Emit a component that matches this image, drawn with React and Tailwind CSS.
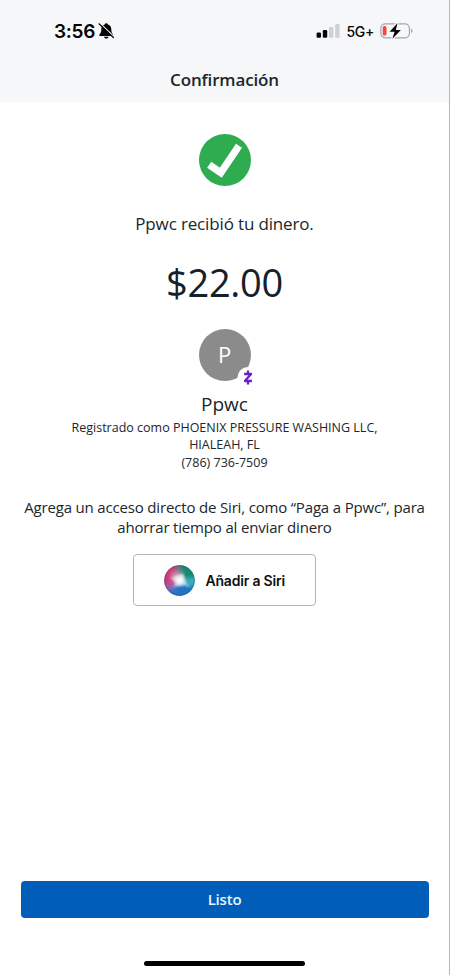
function BellOff() {
  return (
    <svg className="h-[18px] w-[17px]" viewBox="0 0 17 18" fill="none">
      <path d="M8.3 1.2c-.9 0-1.5.6-1.6 1.3C4.300 3.200 3.300 5 3.300 7.300c0 2.800-.6 3.900-1.600 4.900-.4.400-.5.700-.5 1 0 .5.400.8.900.8h12.400c.5 0 .9-.3.9-.8 0-.3-.1-.6-.5-1-1-1-1.600-2.100-1.600-4.900 0-2.300-1-4.100-3.400-4.800-.1-.7-.7-1.300-1.600-1.300z" fill="#050505" />
      <path d="M6 14.700h4.600c-.2 1.100-1.100 1.800-2.300 1.800S6.200 15.800 6 14.700z" fill="#050505" />
      <path d="M2.200 1.500 16.400 15" stroke="#f6f7f9" strokeWidth="1.100" />
      <path d="M1 1.800 15.400 15.500" stroke="#050505" strokeWidth="1.200" strokeLinecap="round" />
    </svg>
  );
}

function Signal() {
  return (
    <svg className="h-[15px] w-[24px]" viewBox="0 0 24 15">
      <rect x="0.600" y="8.500" width="4.400" height="5.300" rx="1.200" fill="#050505" />
      <rect x="6.800" y="6" width="4.400" height="7.800" rx="1.200" fill="#050505" />
      <rect x="13" y="3.100" width="4.400" height="10.700" rx="1.200" fill="#cfd0d2" />
      <rect x="19.200" y="0" width="4.400" height="13.800" rx="1.200" fill="#cfd0d2" />
    </svg>
  );
}

function Battery() {
  return (
    <svg className="h-[18px] w-[34px]" viewBox="0 0 34 18">
      <rect x="0.800" y="1.800" width="28.600" height="14" rx="4.500" fill="none" stroke="#a5a6a8" strokeWidth="1.200" />
      <path d="M31 6.500c1 .4 1.500 1.300 1.500 2.300S32 10.700 31 11.100z" fill="#a5a6a8" />
      <rect x="2.700" y="4" width="3.800" height="9.600" rx="1.700" fill="#f2463f" />
      <path d="M17.600 1 9.600 9.700h5l-2.200 7L20.900 7.900h-5.100z" fill="#050505" stroke="#f6f7f9" strokeWidth="2.600" paintOrder="stroke" strokeLinejoin="round" />
    </svg>
  );
}

function SuccessCheck() {
  return (
    <svg className="h-[52px] w-[52px]" viewBox="0 0 52 52">
      <circle cx="26" cy="26" r="26" fill="#2fab50" />
      <path d="M10.200 30.800 21.800 38.800 40 11.800" fill="none" stroke="#fff" strokeWidth="7.200" strokeLinejoin="miter" />
    </svg>
  );
}

function ZelleBadge() {
  return (
    <svg className="absolute left-[38px] top-[38px] h-[22px] w-[22px]" viewBox="0 0 22 22">
      <circle cx="11" cy="10.500" r="10.500" fill="#fff" />
      <path d="M7.100 7h7L7.900 14h7M11 3.500V7M11 14v3.600" fill="none" stroke="#6a1fc8" strokeWidth="2.300" strokeLinejoin="round" />
    </svg>
  );
}

function SiriOrb() {
  return (
    <svg className="h-[31px] w-[31px]" viewBox="0 0 31 31">
      <defs>
        <clipPath id="orb"><circle cx="15.500" cy="15.500" r="15.200" /></clipPath>
        <filter id="soft" x="-50%" y="-50%" width="200%" height="200%"><feGaussianBlur stdDeviation="2" /></filter>
        <filter id="fine" x="-20%" y="-20%" width="140%" height="140%"><feGaussianBlur stdDeviation="0.900" /></filter>
        <radialGradient id="core"><stop offset="0" stopColor="#fff" /><stop offset=".3" stopColor="#fff" stopOpacity=".85" /><stop offset="1" stopColor="#fff" stopOpacity="0" /></radialGradient>
      </defs>
      <g clipPath="url(#orb)">
        <rect width="31" height="31" fill="#376a9b" />
        <g filter="url(#soft)">
          <path d="M-3 4 12-2 15 15 5 26-3 24z" fill="#cb3b78" />
          <path d="M12-3 32-1 32 14 19 15z" fill="#188a72" />
          <path d="M20 14 34 12 32 22 21 21z" fill="#36b5bd" />
          <path d="M3 23 16 18 29 21 24 33H6z" fill="#2074c5" />
          <path d="M2 20 13 17 9 25z" fill="#9b65b4" />
          <path d="M8 8 17 6 16 14 8 16z" fill="#c99bb8" />
        </g>
        <path d="M6 13 14 11 20 8 20 14 26 22 18 20 9 22 12 17z" fill="#fff" opacity=".5" filter="url(#fine)" />
        <circle cx="15.800" cy="15.400" r="7.500" fill="url(#core)" />
        <circle cx="15.500" cy="15.500" r="14.700" fill="none" stroke="#334b78" strokeOpacity=".3" strokeWidth="1" />
      </g>
    </svg>
  );
}

export default function App() {
  return (
    <div className="flex h-[975px] w-[450px] flex-col overflow-hidden border-r border-[#b5b6b8] bg-white font-['Open_Sans',sans-serif] text-[#20262c]">
      <header className="h-[102px] shrink-0 bg-[#f6f7f9]">
        <div className="flex h-[62px] items-center justify-between pl-[54px] pr-[35px] font-['Inter',sans-serif] text-[#050505]">
          <div className="flex items-center gap-[3px]">
            <span className="pt-px text-[19px] font-semibold leading-6 tracking-[-0.300px]">3:56</span>
            <BellOff />
          </div>
          <div className="flex items-center">
            <Signal />
            <span className="ml-[6px] mr-[6px] pt-px text-[14px] font-medium leading-5 tracking-[-0.300px]">5G+</span>
            <Battery />
          </div>
        </div>
        <h1 className="pt-px text-center text-[17px] font-semibold leading-[34px] tracking-[-0.150px] text-[#20262c]">Confirmación</h1>
      </header>

      <main className="flex flex-1 flex-col items-center pt-8 text-center">
        <SuccessCheck />
        <p className="mt-[26px] text-[17px] leading-6 tracking-[-0.150px]">Ppwc recibió tu dinero.</p>
        <p className="mt-[21px] text-[38px] leading-[50px] tracking-[-0.300px] text-[#15202a]">$22.00</p>
        <div className="relative mt-[22px] flex h-[52px] w-[52px] items-center justify-center rounded-full bg-[#8b8b8b] text-[22px] leading-[50px] text-white">
          <span className="pb-[3px]">P</span>
          <ZelleBadge />
        </div>
        <h2 className="mt-[10px] text-[19px] leading-[26px]">Ppwc</h2>
        <p className="mt-[1.500px] text-[12.500px] leading-[17.500px]">
          Registrado como PHOENIX PRESSURE WASHING LLC,<br />HIALEAH, FL<br />(786) 736-7509
        </p>
        <p className="mt-[26px] whitespace-nowrap text-[15px] leading-5 tracking-[-0.170px]">
          Agrega un acceso directo de Siri, como “Paga a Ppwc”, para<br />ahorrar tiempo al enviar dinero
        </p>
        <button className="mt-[17px] flex h-[52px] w-[183px] items-center rounded-[4px] border border-[#b4b5b6] pl-[30px] font-['Inter',sans-serif] text-[#101010]">
          <SiriOrb />
          <span className="ml-[10.500px] whitespace-nowrap text-[14px] font-semibold tracking-[-0.200px]">Añadir a Siri</span>
        </button>
      </main>

      <footer className="flex h-[94px] shrink-0 flex-col pl-[21px] pr-[20px]">
        <button className="h-[37px] w-full rounded-[4px] bg-[#005eb8] pr-px text-[15px] font-semibold tracking-[-0.200px] text-[#e8f5ff]">Listo</button>
        <div className="ml-[123px] mt-[43px] h-[5px] w-[161px] rounded-full bg-black" />
      </footer>
    </div>
  );
}
